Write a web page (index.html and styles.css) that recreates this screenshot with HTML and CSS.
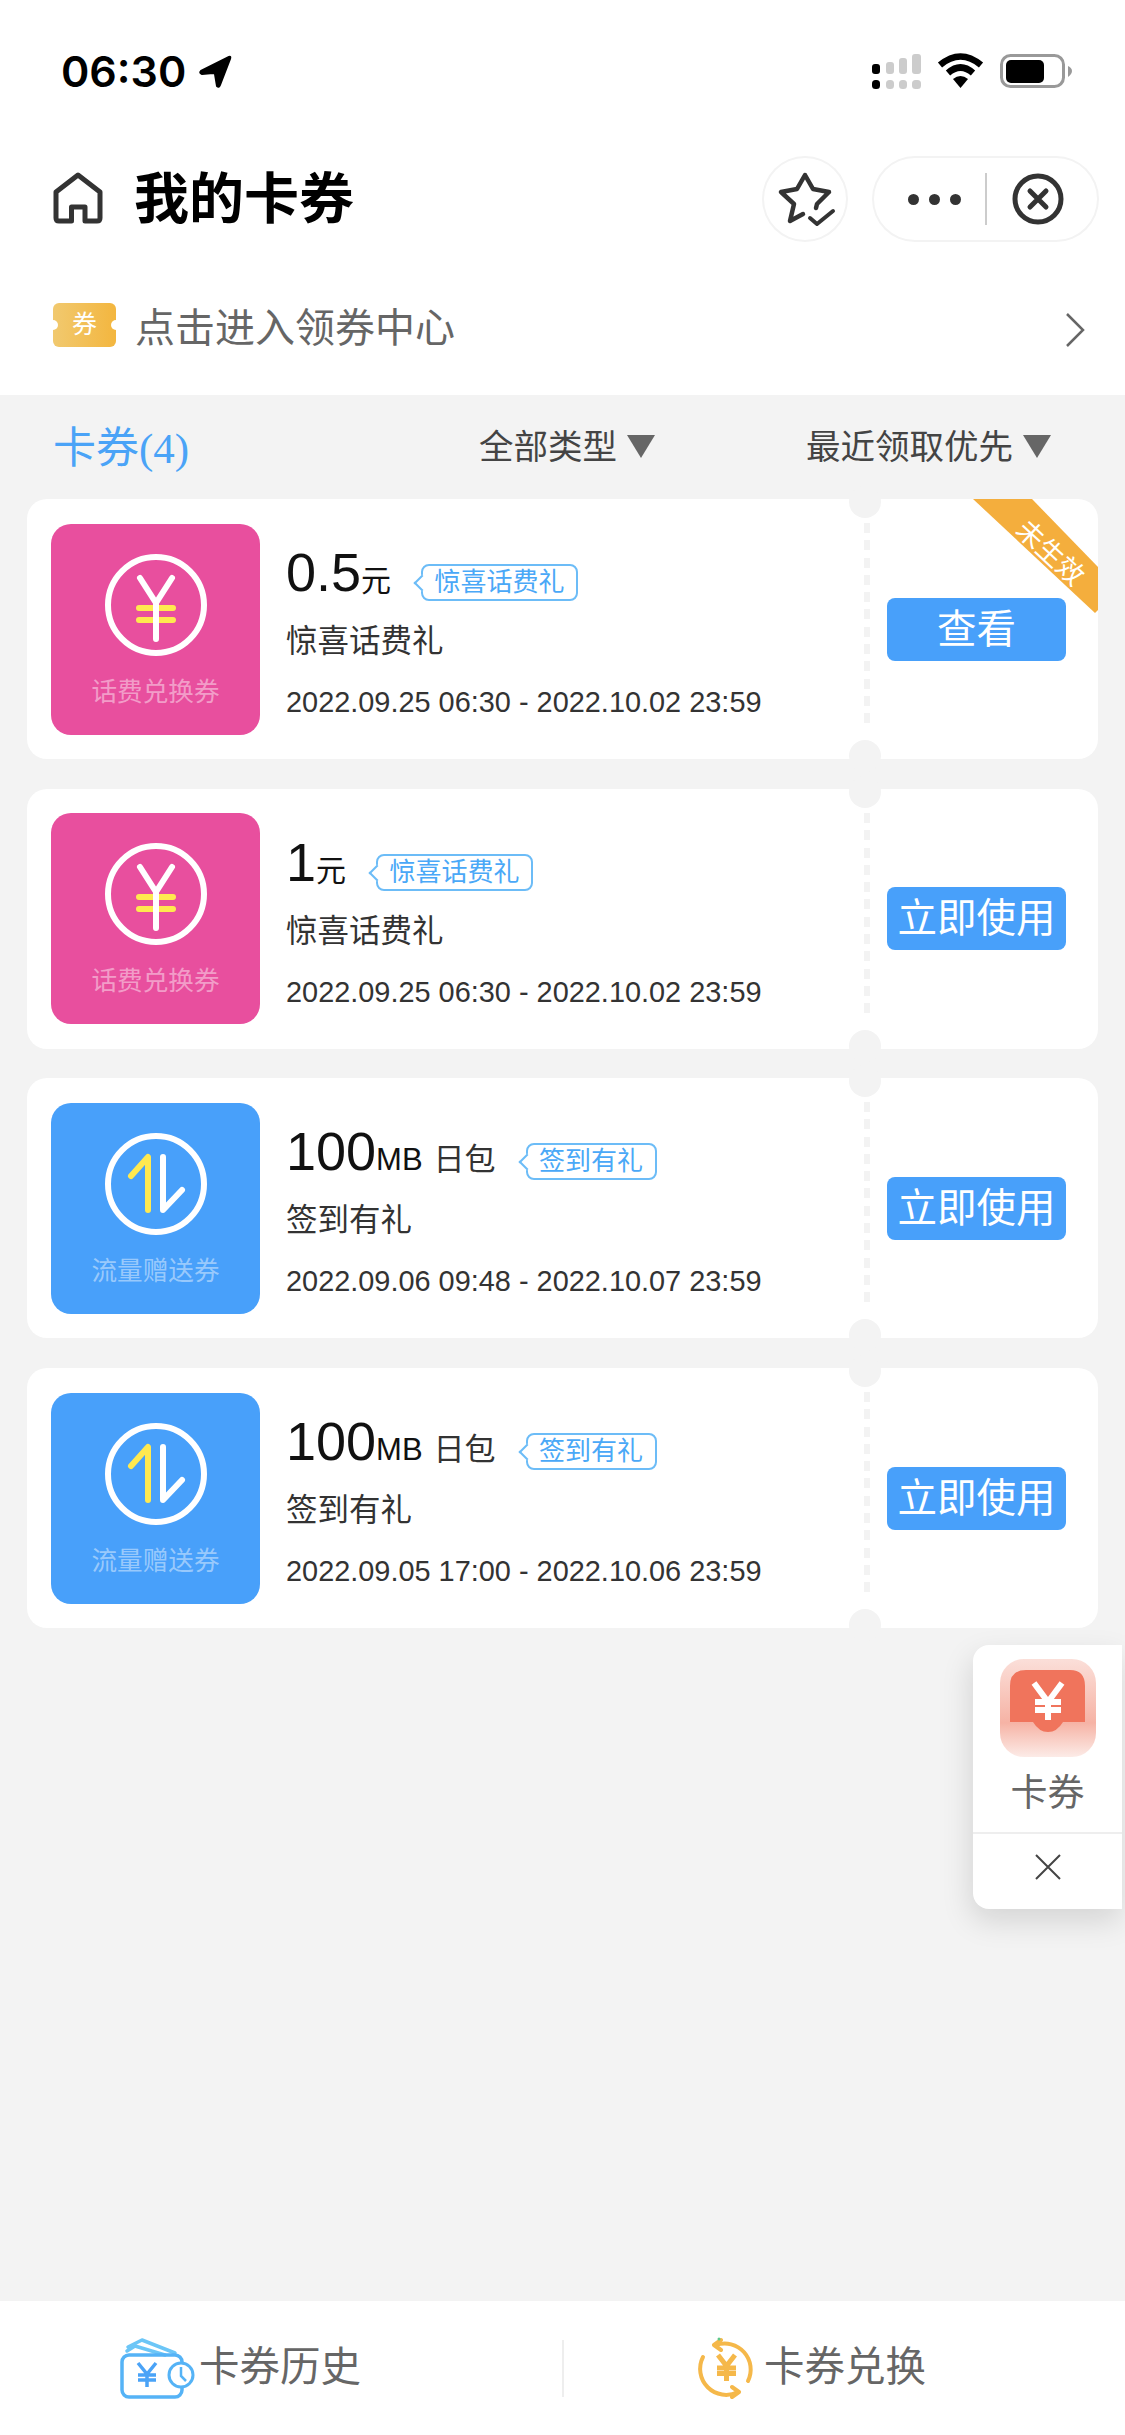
FILE: index.html
```html
<!DOCTYPE html>
<html lang="zh-CN">
<head>
    <meta charset="UTF-8">
    <meta name="viewport" content="width=device-width, initial-scale=1.0">
    <title>我的卡券</title>
    <link rel="stylesheet" href="styles.css">
</head>
<body>
<div class="page">
    <header class="top">
        <div class="status-bar">
            <div class="clock">
                <span>06:30</span>
                <svg class="clock-arrow" width="35" height="35" viewBox="0 0 35 35"><path d="M3 17 L31 3 Q33 2 32 5 L22 31 Q21 34 19 32 L17 20 Q17 19 15 19 L4 20 Q1 19 3 17 Z" fill="#000" stroke="#000" stroke-width="2" stroke-linejoin="round"/></svg>
            </div>
            <div class="status-icons">
                <svg width="49" height="36" viewBox="0 0 49 36">
                    <g fill="#ccc">
                        <rect x="14" y="9" width="8" height="12" rx="3"/><rect x="27" y="5" width="8" height="16" rx="3"/><rect x="40" y="1" width="9" height="20" rx="3"/>
                        <rect x="14" y="27" width="8" height="9" rx="3.5"/><rect x="27" y="27" width="8" height="9" rx="3.5"/><rect x="40" y="27" width="9" height="9" rx="3.5"/>
                    </g>
                    <rect x="0" y="11" width="8" height="10" rx="3"/><rect x="0" y="27" width="8" height="9" rx="3.5"/>
                </svg>
                <svg width="47" height="36" viewBox="0 0 47 36">
                    <path d="M3 12 Q23.5 -5 44 12" fill="none" stroke="#000" stroke-width="6.5"/>
                    <path d="M11 20 Q23.5 9 36 20" fill="none" stroke="#000" stroke-width="6.5"/>
                    <path d="M16 26 Q23.5 20 31 26 L23.5 35 Z" fill="#000"/>
                </svg>
                <svg width="72" height="36" viewBox="0 0 72 36">
                    <rect x="1.5" y="2.5" width="62" height="31" rx="9" fill="none" stroke="#999" stroke-width="3"/>
                    <rect x="6" y="7" width="38" height="23" rx="5"/>
                    <path d="M68 13 Q72 15 72 18 Q72 21 68 24 Z" fill="#999"/>
                </svg>
            </div>
        </div>
        <nav class="nav">
            <svg class="home-icon" width="50" height="52" viewBox="0 0 50 52"><path d="M18.5 49 V35 H32 V49 H44 Q47 49 47 46 V20 L25 3 L3 20 V46 Q3 49 6 49 Z" fill="none" stroke="#333" stroke-width="5" stroke-linejoin="round"/></svg>
            <h1 class="nav-title">我的卡券</h1>
            <div class="nav-actions">
                <div class="star-btn">
                    <svg width="86" height="86" viewBox="0 0 86 86">
                        <path d="M41 58 L28 65 L32 48 L19 36 L35 33 L43 19 L51 33 L67 36 L55 48 L54 52" fill="none" stroke="#333" stroke-width="4.5" stroke-linecap="round" stroke-linejoin="round"/>
                        <path d="M48 62 L55 68 L71 55" fill="none" stroke="#333" stroke-width="4" stroke-linecap="round" stroke-linejoin="round"/>
                    </svg>
                </div>
                <div class="capsule">
                    <div class="capsule-more"><i></i><i></i><i></i></div>
                    <div class="capsule-close">
                        <svg width="52" height="52" viewBox="0 0 52 52">
                            <circle cx="26" cy="26" r="23" fill="none" stroke="#333" stroke-width="5"/>
                            <path d="M18 18 L34 34 M34 18 L18 34" stroke="#333" stroke-width="5" stroke-linecap="round"/>
                        </svg>
                    </div>
                </div>
            </div>
        </nav>
        <div class="coupon-link">
            <span class="ticket-badge">券</span>
            <span class="coupon-link-text">点击进入领券中心</span>
            <svg class="chevron" width="20" height="34" viewBox="0 0 20 34"><path d="M2 1 L18 17 L2 33" fill="none" stroke="#666" stroke-width="2.5"/></svg>
        </div>
    </header>

    <div class="filter-bar">
        <div class="filter-count">卡券(4)</div>
        <div class="filter-item">全部类型<span class="caret"></span></div>
        <div class="filter-item">最近领取优先<span class="caret"></span></div>
    </div>

    <div class="coupon-list">
        <div class="coupon">
            <div class="thumb thumb-pink">
                <svg width="108" height="108" viewBox="0 0 108 108">
                    <circle cx="54" cy="54" r="48" fill="none" stroke="#fff" stroke-width="6"/>
                    <path d="M37 57 H71 M37 69 H71" stroke="#ffe94f" stroke-width="6" stroke-linecap="round"/>
                    <path d="M38 27 L54 52 L70 27 M54 52 V88" fill="none" stroke="#fff" stroke-width="6" stroke-linecap="round" stroke-linejoin="round"/>
                </svg>
                <div class="thumb-name">话费兑换券</div>
            </div>
            <div class="coupon-body">
                <div class="amount"><span class="amount-num">0.5</span><span class="amount-unit">元</span><span class="tag">惊喜话费礼</span></div>
                <div class="coupon-title">惊喜话费礼</div>
                <div class="coupon-date">2022.09.25 06:30 - 2022.10.02 23:59</div>
            </div>
            <div class="coupon-side"><div class="coupon-btn">查看</div></div>
            <div class="ribbon"><span>未生效</span></div>
        </div>

        <div class="coupon">
            <div class="thumb thumb-pink">
                <svg width="108" height="108" viewBox="0 0 108 108">
                    <circle cx="54" cy="54" r="48" fill="none" stroke="#fff" stroke-width="6"/>
                    <path d="M37 57 H71 M37 69 H71" stroke="#ffe94f" stroke-width="6" stroke-linecap="round"/>
                    <path d="M38 27 L54 52 L70 27 M54 52 V88" fill="none" stroke="#fff" stroke-width="6" stroke-linecap="round" stroke-linejoin="round"/>
                </svg>
                <div class="thumb-name">话费兑换券</div>
            </div>
            <div class="coupon-body">
                <div class="amount"><span class="amount-num">1</span><span class="amount-unit">元</span><span class="tag">惊喜话费礼</span></div>
                <div class="coupon-title">惊喜话费礼</div>
                <div class="coupon-date">2022.09.25 06:30 - 2022.10.02 23:59</div>
            </div>
            <div class="coupon-side"><div class="coupon-btn">立即使用</div></div>
        </div>

        <div class="coupon">
            <div class="thumb thumb-blue">
                <svg width="108" height="108" viewBox="0 0 108 108">
                    <circle cx="54" cy="54" r="48" fill="none" stroke="#fff" stroke-width="6"/>
                    <path d="M29 46 L46 27 V80" fill="none" stroke="#ffe94f" stroke-width="6" stroke-linecap="round" stroke-linejoin="round"/>
                    <path d="M61 27 V80 L80 60" fill="none" stroke="#fff" stroke-width="6" stroke-linecap="round" stroke-linejoin="round"/>
                </svg>
                <div class="thumb-name">流量赠送券</div>
            </div>
            <div class="coupon-body">
                <div class="amount"><span class="amount-num">100</span><span class="amount-mb">MB</span><span class="amount-period">日包</span><span class="tag">签到有礼</span></div>
                <div class="coupon-title">签到有礼</div>
                <div class="coupon-date">2022.09.06 09:48 - 2022.10.07 23:59</div>
            </div>
            <div class="coupon-side"><div class="coupon-btn">立即使用</div></div>
        </div>

        <div class="coupon">
            <div class="thumb thumb-blue">
                <svg width="108" height="108" viewBox="0 0 108 108">
                    <circle cx="54" cy="54" r="48" fill="none" stroke="#fff" stroke-width="6"/>
                    <path d="M29 46 L46 27 V80" fill="none" stroke="#ffe94f" stroke-width="6" stroke-linecap="round" stroke-linejoin="round"/>
                    <path d="M61 27 V80 L80 60" fill="none" stroke="#fff" stroke-width="6" stroke-linecap="round" stroke-linejoin="round"/>
                </svg>
                <div class="thumb-name">流量赠送券</div>
            </div>
            <div class="coupon-body">
                <div class="amount"><span class="amount-num">100</span><span class="amount-mb">MB</span><span class="amount-period">日包</span><span class="tag">签到有礼</span></div>
                <div class="coupon-title">签到有礼</div>
                <div class="coupon-date">2022.09.05 17:00 - 2022.10.06 23:59</div>
            </div>
            <div class="coupon-side"><div class="coupon-btn">立即使用</div></div>
        </div>
    </div>

    <div class="float-widget">
        <div class="float-main">
            <svg width="96" height="98" viewBox="0 0 96 98">
                <defs>
                    <linearGradient id="floatFade" x1="0" y1="0" x2="0" y2="1">
                        <stop offset="0" stop-color="#fbdfd9"/>
                        <stop offset="0.65" stop-color="#f6b3a5"/>
                        <stop offset="1" stop-color="#fcebe7"/>
                    </linearGradient>
                </defs>
                <rect width="96" height="98" rx="24" fill="url(#floatFade)"/>
                <path d="M10 63 V27 Q10 11 26 11 H70 Q85 11 85 27 V63 H63 Q57 73 48 73 Q39 73 33 63 Z" fill="#f0745c"/>
                <path d="M34 24 L48 43 L62 24 M48 43 V61 M35 43 H61 M35 51 H61" fill="none" stroke="#fff" stroke-width="6"/>
            </svg>
            <div class="float-label">卡券</div>
        </div>
        <div class="float-close">
            <svg width="28" height="28" viewBox="0 0 28 28"><path d="M2 2 L26 26 M26 2 L2 26" stroke="#444" stroke-width="2"/></svg>
        </div>
    </div>

    <footer class="bottom-bar">
        <div class="bottom-item bottom-history">
            <svg width="76" height="64" viewBox="0 0 76 64">
                <path d="M9 11 L23 4 L56 17 M8 15 L16 10 L46 19" fill="none" stroke="#6cc6f7" stroke-width="3.5" stroke-linecap="round" stroke-linejoin="round"/>
                <rect x="3" y="19" width="60" height="42" rx="7" fill="none" stroke="#55b3f6" stroke-width="3.5"/>
                <circle cx="62" cy="39" r="12" fill="#fff" stroke="#55b3f6" stroke-width="3"/>
                <path d="M62 31 V40 L67 45" fill="none" stroke="#55b3f6" stroke-width="2.5"/>
                <path d="M19 27 L28 38 L37 27 M28 38 V51 M19 39 H37 M19 44 H37" fill="none" stroke="#4aa3f7" stroke-width="3.5"/>
            </svg>
            <span class="bottom-text">卡券历史</span>
        </div>
        <div class="bottom-item bottom-exchange">
            <svg width="60" height="62" viewBox="0 0 60 62">
                <path d="M19 8 A26 26 0 0 1 51 44 M6 20 A26 26 0 0 0 41 55" fill="none" stroke="#f5b84a" stroke-width="4" stroke-linecap="round"/>
                <path d="M24 3 L17 8 L24 13 M35 50 L42 55 L35 60" fill="none" stroke="#f5b84a" stroke-width="4" stroke-linecap="round" stroke-linejoin="round"/>
                <path d="M21 18 L29.5 29 L38 18 M29.5 29 V44 M20 31 H39 M20 36.5 H39" fill="none" stroke="#f5b84a" stroke-width="5"/>
                <circle cx="22" cy="2" r="1.5" fill="#5ec98a"/>
            </svg>
            <span class="bottom-text">卡券兑换</span>
        </div>
    </footer>
</div>
</body>
</html>
```

FILE: styles.css
```css
body {
    margin: 0;
    font-family: "Liberation Sans", "Noto Sans CJK SC", sans-serif;
    background-color: #f3f3f3;
    color: #333;
}
.page {
    position: relative;
    width: 1125px;
    height: 2435px;
    display: flex;
    flex-direction: column;
    overflow: hidden;
}

/* top white area */
.top {
    background: #fff;
    height: 395px;
}
.status-bar {
    display: flex;
    justify-content: space-between;
    align-items: center;
    height: 36px;
    padding: 53px 53px 0 61px;
}
.clock {
    display: flex;
    align-items: center;
    gap: 12px;
    font-family: Inter, "Liberation Sans", sans-serif;
    font-size: 43px;
    font-weight: 600;
    color: #000;
}
.status-icons {
    display: flex;
    gap: 16px;
}
.nav {
    display: flex;
    align-items: center;
    height: 86px;
    margin-top: 67px;
    padding: 0 26px 0 53px;
}
.home-icon {
    margin-bottom: 2px;
}
.nav-title {
    margin: 0 0 10px 31px;
    font-size: 55px;
    font-weight: 700;
    color: #000;
}
.nav-actions {
    display: flex;
    gap: 24px;
    margin-left: auto;
}
.star-btn {
    width: 86px;
    height: 86px;
    box-sizing: border-box;
    border-radius: 50%;
    box-shadow: inset 0 0 0 2px #f3f3f3;
}
.capsule {
    display: flex;
    width: 227px;
    height: 86px;
    border-radius: 43px;
    box-shadow: inset 0 0 0 2px #f3f3f3;
}
.capsule-more {
    display: flex;
    align-items: center;
    justify-content: center;
    gap: 10px;
    box-sizing: border-box;
    width: 113px;
    padding-left: 11px;
}
.capsule-more i {
    width: 11px;
    height: 11px;
    border-radius: 50%;
    background: #333;
}
.capsule-close {
    flex: 1;
    display: flex;
    align-items: center;
    justify-content: center;
    margin: 17px 0;
    padding-right: 10px;
    border-left: 2px solid #ccc;
}
.coupon-link {
    display: flex;
    align-items: center;
    height: 44px;
    margin-top: 61px;
    padding: 0 40px 0 53px;
}
.ticket-badge {
    position: relative;
    overflow: hidden;
    width: 63px;
    height: 44px;
    line-height: 42px;
    text-align: center;
    font-size: 25px;
    color: #fff;
    border-radius: 6px;
    background: linear-gradient(90deg, #f1c96f, #f3b63f);
}
.ticket-badge::before,
.ticket-badge::after {
    content: "";
    position: absolute;
    top: 17px;
    width: 10px;
    height: 10px;
    border-radius: 50%;
    background: #fff;
}
.ticket-badge::before { left: -5px; }
.ticket-badge::after { right: -5px; }
.coupon-link-text {
    margin-left: 19px;
    font-size: 40px;
    color: #666;
}
.chevron {
    margin-left: auto;
    margin-top: 10px;
}

/* filter row */
.filter-bar {
    display: grid;
    grid-template-columns: 426px 327px 1fr;
    align-items: center;
    box-sizing: border-box;
    height: 104px;
    padding: 0 0 6px 53px;
}
.filter-count {
    font-family: "Liberation Serif", "Noto Sans CJK SC", serif;
    font-size: 43px;
    color: #4aa3f7;
}
.filter-item {
    display: flex;
    align-items: center;
    font-size: 34.5px;
    color: #444;
}
.caret {
    width: 0;
    height: 0;
    margin: 5px 0 0 10px;
    border-left: 14.5px solid transparent;
    border-right: 14.5px solid transparent;
    border-top: 23px solid #666;
}

/* coupons */
.coupon-list {
    display: flex;
    flex-direction: column;
    gap: 29.7px;
    padding: 0 27px;
}
.coupon {
    position: relative;
    display: flex;
    align-items: center;
    height: 260px;
    background: #fff;
    border-radius: 20px;
}
.thumb {
    flex: none;
    display: flex;
    flex-direction: column;
    align-items: center;
    box-sizing: border-box;
    width: 209px;
    height: 211px;
    margin-left: 24px;
    padding-top: 27px;
    border-radius: 20px;
}
.thumb-pink { background: #e84f9e; }
.thumb-blue { background: #48a0fa; }
.thumb-name {
    margin-top: 15px;
    line-height: 36px;
    font-size: 25.6px;
    color: rgba(255, 255, 255, 0.45);
}
.coupon-body {
    flex: 1;
    align-self: flex-start;
    margin-left: 26px;
    padding-top: 42px;
}
.amount {
    display: flex;
    align-items: baseline;
    height: 62px;
    line-height: 62px;
    color: #111;
}
.amount-num { font-size: 54px; }
.amount-unit { font-size: 30px; }
.amount-mb { font-size: 31px; }
.amount-period {
    margin-left: 11px;
    font-size: 31px;
    color: #333;
}
.tag {
    position: relative;
    box-sizing: border-box;
    height: 37px;
    line-height: 32px;
    margin-left: 30px;
    padding: 0 11.5px;
    font-size: 26px;
    color: #4aa8f7;
    border: 2px solid #6cbcf7;
    border-radius: 8px;
    background: #fff;
}
.tag::before {
    content: "";
    position: absolute;
    left: -7px;
    top: 11px;
    width: 10px;
    height: 10px;
    background: #fff;
    border-left: 2px solid #6cbcf7;
    border-bottom: 2px solid #6cbcf7;
    transform: rotate(45deg);
}
.coupon-title {
    margin-top: 15px;
    line-height: 46px;
    font-size: 31.5px;
}
.coupon-date {
    margin-top: 18px;
    line-height: 40px;
    font-size: 28.9px;
}
.coupon-side {
    position: relative;
    flex: none;
    display: flex;
    align-items: center;
    align-self: stretch;
    box-sizing: border-box;
    width: 233px;
    padding-left: 22px;
}
/* dotted tear line */
.coupon-side::before {
    content: "";
    position: absolute;
    left: -1px;
    top: 24px;
    width: 6px;
    height: 203px;
    background: repeating-linear-gradient(#f3f3f3 0, #f3f3f3 10px, transparent 10px, transparent 17.3px);
}
/* cut-outs at the top and bottom of the tear line */
.coupon::before,
.coupon::after {
    content: "";
    position: absolute;
    left: 822px;
    width: 32px;
    height: 32px;
    border-radius: 50%;
    background: #f3f3f3;
}
.coupon::before { top: -13px; }
.coupon::after { bottom: -13px; }
.coupon-btn {
    width: 179px;
    height: 63px;
    line-height: 62px;
    text-align: center;
    font-size: 39.5px;
    color: #fff;
    background: #48a0fa;
    border-radius: 8px;
}
.ribbon {
    position: absolute;
    top: 0;
    right: 0;
    width: 125px;
    height: 114px;
    background: #f4ae3d;
    clip-path: polygon(0 0, 59px 0, 125px 68px, 125px 111px, 122px 114px);
}
.ribbon span {
    position: absolute;
    left: 27px;
    top: 36px;
    width: 100px;
    line-height: 36px;
    text-align: center;
    font-size: 27px;
    color: #fff;
    transform: rotate(43deg);
}

/* floating shortcut */
.float-widget {
    position: absolute;
    top: 1645px;
    right: 3px;
    width: 149px;
    height: 264px;
    background: #fff;
    border-radius: 16px 0 0 16px;
    box-shadow: -2px 12px 30px rgba(0, 0, 0, 0.13);
}
.float-main {
    display: flex;
    flex-direction: column;
    align-items: center;
    box-sizing: border-box;
    height: 189px;
    padding-top: 14px;
    border-bottom: 2px solid #eee;
}
.float-label {
    margin-top: 12px;
    line-height: 50px;
    font-size: 37px;
    color: #666;
}
.float-close {
    display: flex;
    justify-content: center;
    padding-top: 19px;
}

/* bottom bar */
.bottom-bar {
    display: flex;
    margin-top: auto;
    height: 134px;
    align-items: center;
    background: #fff;
}
.bottom-item {
    display: flex;
    align-items: center;
    height: 57px;
}
.bottom-history {
    width: 443px;
    padding-left: 119px;
    border-right: 2px solid #eee;
}
.bottom-exchange {
    padding-left: 133px;
}
.bottom-text {
    margin-bottom: 10px;
    font-size: 40.5px;
    color: #666;
}
.bottom-history .bottom-text { margin-left: 4px; }
.bottom-exchange .bottom-text { margin-left: 7px; }
```
